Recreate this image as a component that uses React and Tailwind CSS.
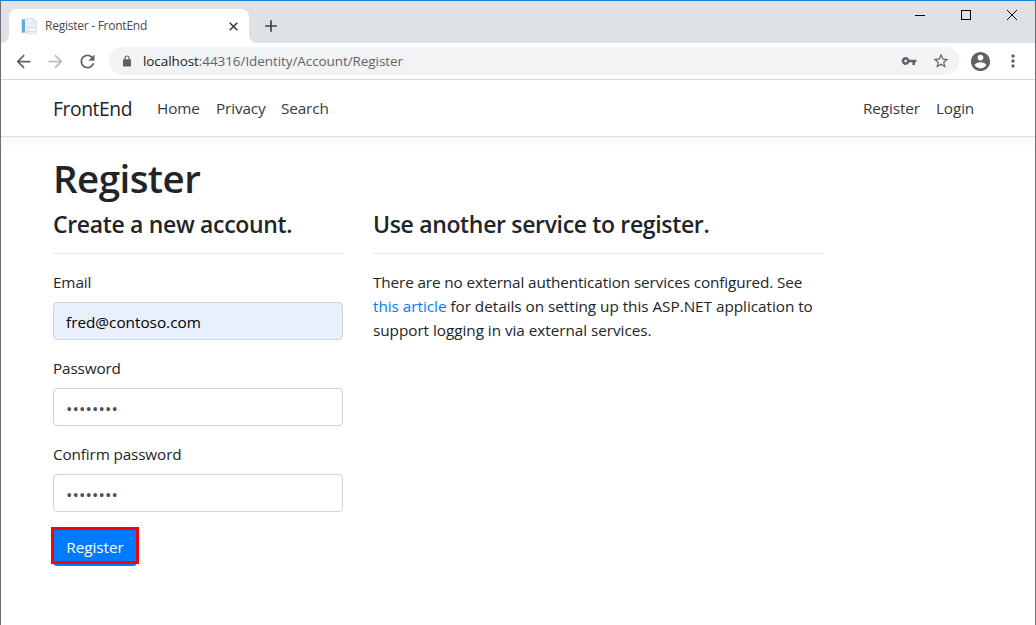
import React from "react";
import {
  MdArrowBack,
  MdArrowForward,
  MdRefresh,
  MdVpnKey,
  MdStarBorder,
  MdMoreVert,
  MdAdd,
} from "react-icons/md";

function PageIcon() {
  return (
    <svg width="16" height="16" viewBox="0 0 16 16" className="shrink-0">
      <rect x="0.5" y="1" width="10" height="14" fill="#f4f7fa" stroke="#d5dde6" strokeWidth="0.7" />
      <rect x="1" y="1.5" width="3" height="13" fill="#5fabda" />
      <path d="M6 0.5h6.5l3 3v12H6z" fill="#f0f2f6" stroke="#d4d9e0" strokeWidth="0.7" />
      <path d="M12.5 0.5v3h3" fill="#fff" stroke="#c3c9d6" strokeWidth="0.7" />
      <path d="M8 5.5h5M8 7.5h6" stroke="#dde1e9" strokeWidth="0.8" />
      <rect x="7.5" y="9.5" width="6.5" height="4" fill="#fafbfd" stroke="#c9d0dd" strokeWidth="0.7" />
    </svg>
  );
}

function LockIcon() {
  return (
    <svg width="8" height="12" viewBox="0 0 8 12" className="shrink-0">
      <path d="M2 5V3a2 2 0 0 1 4 0v2" fill="none" stroke="currentColor" strokeWidth="1.2" />
      <rect x="0" y="4.3" width="8" height="7.2" rx="0.8" fill="currentColor" />
    </svg>
  );
}

function AccountIcon() {
  return (
    <svg width="23" height="23" viewBox="0 0 24 24" fill="currentColor" className="ml-[10px] shrink-0">
      <path d="M12 2C6.48 2 2 6.48 2 12s4.48 10 10 10 10-4.48 10-10S17.52 2 12 2zm0 3c1.66 0 3 1.34 3 3s-1.34 3-3 3-3-1.34-3-3 1.34-3 3-3zm0 14.2c-2.5 0-4.71-1.28-6-3.22.03-1.99 4-3.08 6-3.08 1.99 0 5.97 1.09 6 3.08-1.29 1.94-3.5 3.22-6 3.22z" />
    </svg>
  );
}

function TitleBar() {
  return (
    <div className="flex h-[42px] shrink-0 items-start justify-between bg-[#dee1e6]">
      <div className="flex pt-2">
        <div className="flex w-2 items-end bg-white">
          <div className="h-[34px] w-2 rounded-br-lg bg-[#dee1e6]" />
        </div>
        <div className="flex h-[34px] w-60 items-center rounded-t-lg bg-white pr-[11px] pl-3">
          <PageIcon />
          <span className="ml-2 flex-1 text-[12px] tracking-[-0.25px] text-[#45484c]">Register - FrontEnd</span>
          <svg width="9" height="9" viewBox="0 0 9 9">
            <path d="M0.7 0.7l7.6 7.6M8.3 0.7L0.7 8.3" stroke="#3c4043" strokeWidth="1.6" />
          </svg>
        </div>
        <div className="flex w-2 items-end bg-white">
          <div className="h-[34px] w-2 rounded-bl-lg bg-[#dee1e6]" />
        </div>
        <MdAdd size={20} className="mt-[7px] ml-1 text-[#3c4043]" />
      </div>
      <div className="flex h-7 items-center gap-9 pr-[18px]">
        <svg width="10" height="10" viewBox="0 0 10 10" shapeRendering="crispEdges">
          <path d="M0 5.5h10" stroke="#000" />
        </svg>
        <svg width="10" height="10" viewBox="0 0 10 10" shapeRendering="crispEdges">
          <rect x="0.5" y="0.5" width="9" height="9" fill="none" stroke="#000" />
        </svg>
        <svg width="10" height="10" viewBox="0 0 10 10">
          <path d="M0 0l10 10M10 0L0 10" stroke="#000" />
        </svg>
      </div>
    </div>
  );
}

function Toolbar() {
  return (
    <div className="flex h-[37px] shrink-0 items-center border-b border-[#d9dadc] bg-white pl-[11.5px] text-[#5f6368]">
      <MdArrowBack size={21} />
      <MdArrowForward size={21} className="ml-[11px] text-[#babcbe]" />
      <MdRefresh size={21} className="ml-[11px]" />
      <div className="ml-[11.5px] flex h-7 w-[850px] items-center rounded-full bg-[#f1f3f4] pr-[9px] pl-[14px]">
        <LockIcon />
        <span className="ml-3 flex-1 text-[13.5px] tracking-[-0.08px]">
          <span className="text-[#202124]">localhost</span>:44316/Identity/Account/Register
        </span>
        <MdVpnKey size={16} />
        <MdStarBorder size={18} className="ml-[15px]" />
      </div>
      <AccountIcon />
      <MdMoreVert size={20} className="ml-[11px]" />
    </div>
  );
}

function SiteNav() {
  return (
    <nav className="flex h-[57px] shrink-0 items-center border-b border-[#dee2e6] bg-white pr-[60px] pl-[52px] text-[15.3px] tracking-[-0.12px] text-[#343a40] shadow-[0_4px_12px_rgba(0,0,0,0.05)]">
      <a className="w-[104px] pt-0.5 text-[19.3px] tracking-[-0.42px] text-[#212529]">FrontEnd</a>
      <a className="w-[59px]">Home</a>
      <a className="w-[65px]">Privacy</a>
      <a className="flex-1">Search</a>
      <a className="w-[73px]">Register</a>
      <a className="w-[39px]">Login</a>
    </nav>
  );
}

function Field({ label, type, value, fill }) {
  return (
    <label className="mb-4 flex flex-col gap-2">
      <span className="h-6 leading-6">{label}</span>
      <input
        type={type}
        defaultValue={value}
        className={`h-[38px] w-full rounded border border-[#ced4da] px-3 outline-none ${fill}`}
      />
    </label>
  );
}

export default function App() {
  return (
    <div className="flex h-[625px] w-[1036px] flex-col overflow-hidden border-x border-t border-x-[#6b6d70] border-t-[#1883d7] bg-white font-['Open_Sans','Noto_Sans',sans-serif]">
      <TitleBar />
      <Toolbar />
      <SiteNav />
      <main className="px-[52px] pt-[15px] text-[15.3px] leading-6 tracking-[-0.14px] text-[#212529]">
        <h1 className="h-14 text-[38.5px] leading-[53px] font-semibold tracking-[-0.55px]">Register</h1>
        <div className="flex gap-[30px]">
          <form className="w-[290px]">
            <h4 className="h-[46px] border-b border-[#e5e5e5] text-[23px] leading-[32px] font-semibold tracking-[-0.33px]">
              Create a new account.
            </h4>
            <div className="pt-4">
              <Field
                label="Email"
                type="text"
                value="fred@contoso.com"
                fill="bg-[#e8f0fe] pt-0.5 tracking-normal text-black"
              />
              <Field
                label="Password"
                type="password"
                value="password"
                fill="bg-white pt-0.5 text-[17px] tracking-[0.1px] text-[#495057]"
              />
              <Field
                label="Confirm password"
                type="password"
                value="password"
                fill="bg-white pt-0.5 text-[17px] tracking-[0.1px] text-[#495057]"
              />
            </div>
            <div className="relative w-[84px]">
              <button type="button" className="h-[38px] w-[84px] rounded bg-[#007bff] tracking-[-0.05px] text-white">
                Register
              </button>
              <div className="absolute -top-px -left-[2px] h-[37px] w-[88px] border-3 border-[#f00]" />
            </div>
          </form>
          <section className="w-[450px]">
            <h4 className="h-[46px] border-b border-[#e5e5e5] text-[23px] leading-[32px] font-semibold tracking-[-0.34px]">
              Use another service to register.
            </h4>
            <p className="pt-4 whitespace-nowrap">
              <span className="tracking-[-0.12px]">There are no external authentication services configured. See</span>
              <br />
              <span className="tracking-[-0.03px]">
                <a className="text-[#007bff]">this article</a> for details on setting up this ASP.NET application to
              </span>
              <br />
              <span className="tracking-[-0.04px]">support logging in via external services.</span>
            </p>
          </section>
        </div>
      </main>
    </div>
  );
}
